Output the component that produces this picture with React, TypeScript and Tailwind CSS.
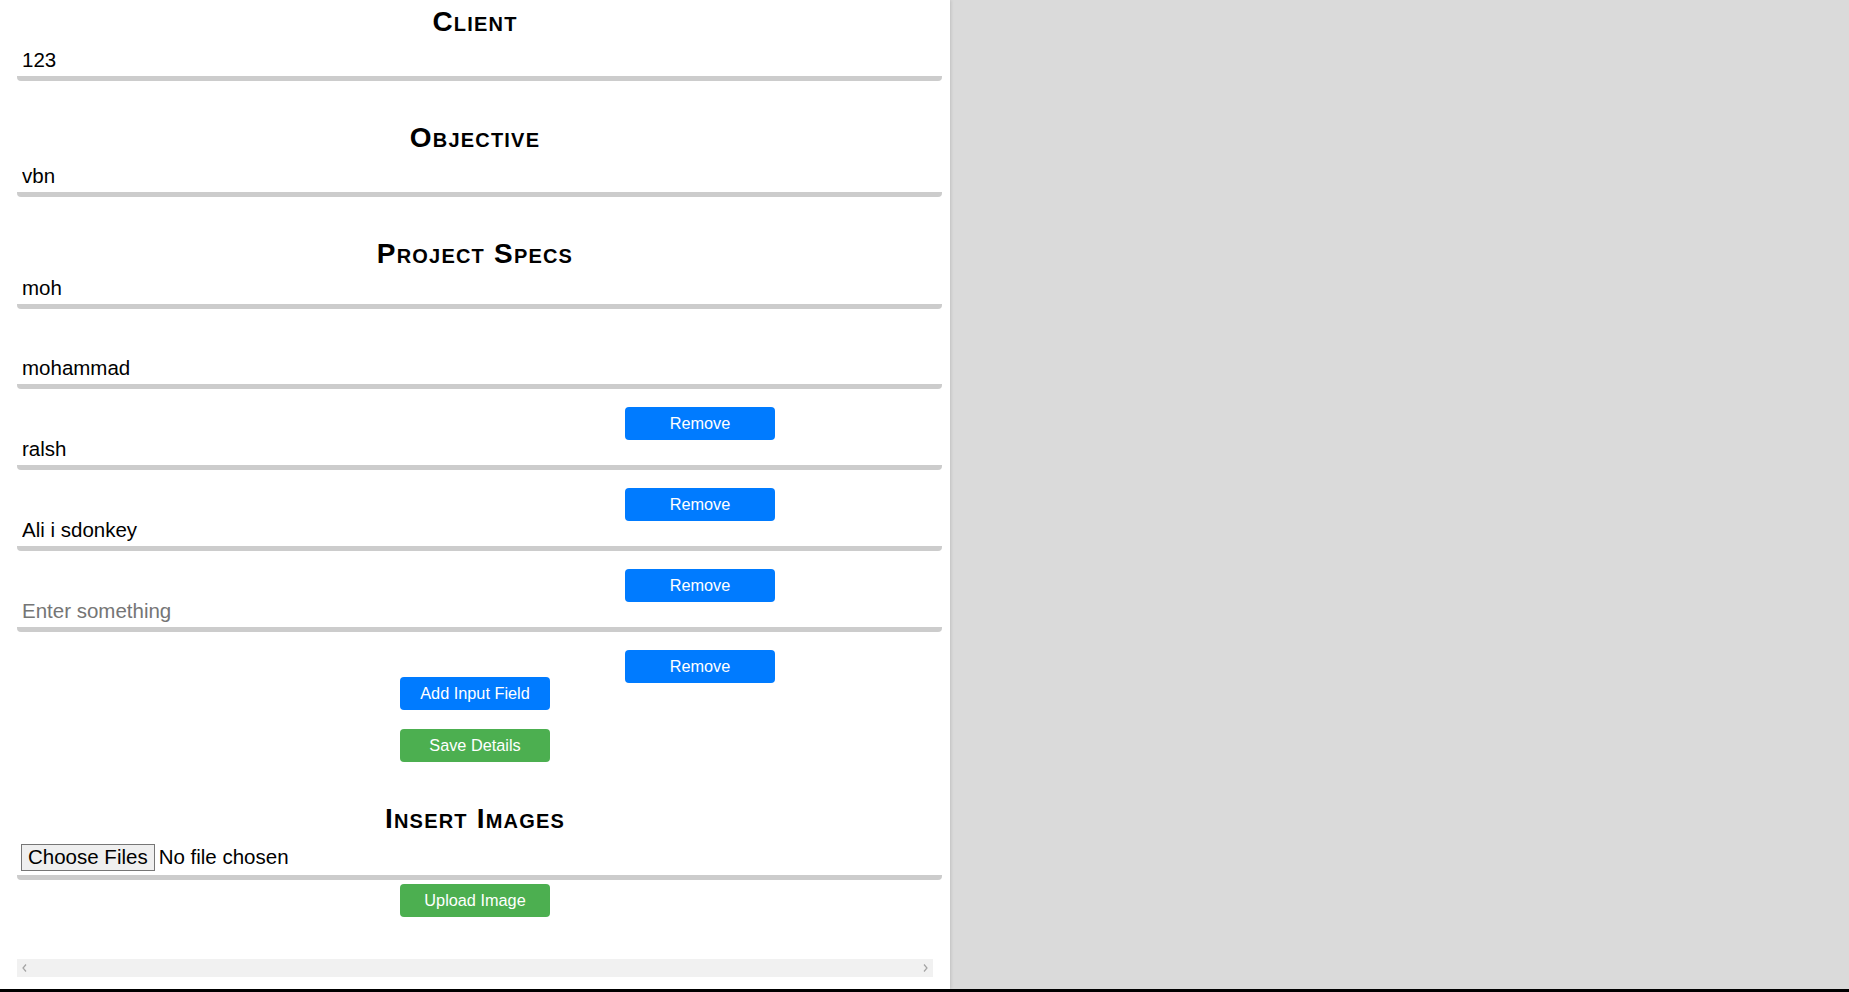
import React from "react";

const font = "font-['Liberation_Sans',Arial,sans-serif]";

function Heading({ children, className = "" }: { children: React.ReactNode; className?: string }) {
  return (
    <h2
      className={`text-center text-[28px] leading-[32px] font-bold [font-variant-caps:small-caps] tracking-[1.2px] text-black ${className}`}
    >
      {children}
    </h2>
  );
}

function Field({ value, placeholder, className = "" }: { value?: string; placeholder?: string; className?: string }) {
  return (
    <div className={`ml-[17px] mr-[8px] ${className}`}>
      <input
        defaultValue={value}
        placeholder={placeholder}
        className="block w-full h-[38px] border-b-[5px] border-[#cccccc] rounded-[4px] px-[5px] text-[20.5px] text-black bg-white outline-none placeholder:text-[#757575]"
      />
    </div>
  );
}

function RemoveBtn() {
  return (
    <button className="block ml-[625px] mt-[18px] mb-[-8px] w-[150px] h-[33px] rounded-[4px] bg-[#007bff] text-white text-[16.3px] leading-[33px] relative z-10">
      Remove
    </button>
  );
}

function Chevron({ dir }: { dir: "l" | "r" }) {
  return (
    <svg width="5" height="8" viewBox="0 0 5 8" className="block">
      {dir === "l" ? (
        <path d="M4 0.5 L1 4 L4 7.5" fill="none" stroke="#a3a3a3" strokeWidth="1.2" />
      ) : (
        <path d="M1 0.5 L4 4 L1 7.5" fill="none" stroke="#a3a3a3" strokeWidth="1.2" />
      )}
    </svg>
  );
}

export default function App() {
  return (
    <div className={`w-[1849px] h-[992px] flex flex-col bg-[#dadada] ${font}`}>
      <div className="flex-1 flex min-h-0">
        <div className="w-[950px] h-full bg-white shadow-[1px_0_3px_rgba(0,0,0,0.12)] relative z-10 pt-[6px]">
          <Heading>Client</Heading>
          <Field value="123" className="mt-[5px]" />

          <Heading className="mt-[41px]">Objective</Heading>
          <Field value="vbn" className="mt-[5px]" />

          <Heading className="mt-[41px]">Project Specs</Heading>
          <Field value="moh" className="mt-[1px]" />
          <Field value="mohammad" className="mt-[42px]" />
          <RemoveBtn />
          <Field value="ralsh" />
          <RemoveBtn />
          <Field value="Ali i sdonkey" />
          <RemoveBtn />
          <Field placeholder="Enter something" />
          <button className="block ml-[625px] mt-[18px] mb-[-6px] w-[150px] h-[33px] rounded-[4px] bg-[#007bff] text-white text-[16.3px] leading-[33px]">
            Remove
          </button>

          <button className="block mx-auto w-[150px] h-[33px] rounded-[4px] bg-[#007bff] text-white text-[16.3px] leading-[33px] relative z-10">
            Add Input Field
          </button>
          <button className="block mx-auto mt-[19px] w-[150px] h-[33px] rounded-[4px] bg-[#4caf50] text-white text-[16.3px] leading-[33px]">
            Save Details
          </button>

          <Heading className="mt-[41px]">Insert Images</Heading>
          <div className="ml-[17px] mr-[8px] mt-[5px] h-[40px] border-b-[5px] border-[#cccccc] rounded-[4px] flex items-center pl-[4px]">
            <span className="inline-flex items-center h-[27px] px-[6px] border border-[#767676] bg-[#efefef] text-[20.5px] text-black leading-none">
              Choose Files
            </span>
            <span className="ml-[4px] text-[20.5px] text-black leading-none">No file chosen</span>
          </div>
          <button className="block mx-auto mt-[4px] w-[150px] h-[33px] rounded-[4px] bg-[#4caf50] text-white text-[16.3px] leading-[33px]">
            Upload Image
          </button>

          <div className="ml-[17px] mt-[42px] w-[916px] h-[18px] bg-[#f1f1f1] flex items-center justify-between px-[5px]">
            <Chevron dir="l" />
            <Chevron dir="r" />
          </div>
        </div>
        <div className="flex-1 bg-[#dadada]" />
      </div>
      <div className="h-[3px] bg-black" />
    </div>
  );
}
